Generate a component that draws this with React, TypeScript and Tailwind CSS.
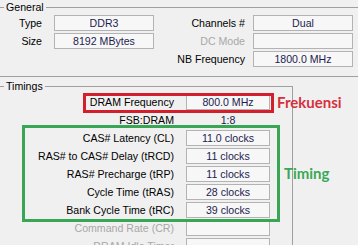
const FONT = "font-['Liberation_Sans',Arial,sans-serif]";

function Title({ text, boxed }: { text: string; boxed?: boolean }) {
  return (
    <div className="flex h-[14px]">
      <div className="w-[4px] mt-[7px] border-t border-[#a0a0a0]" />
      <span className="px-[2px] leading-[14px] text-black">{text}</span>
      <div className={`flex-1 mt-[7px] border-t border-[#a0a0a0] ${boxed ? 'border-r' : ''}`} />
    </div>
  );
}

function Box({ value, w }: { value?: string; w: string }) {
  return (
    <div className={`${w} h-[16px] border border-[#b3b3b3] bg-[#f7f7f7] text-center leading-[14px] text-[#1c1c50]`}>
      {value}
    </div>
  );
}

const general = [
  { l: 'Type', v: 'DDR3', rl: 'Channels #', rv: 'Dual' },
  { l: 'Size', v: '8192 MBytes', rl: 'DC Mode', rv: '', dim: true },
  { l: '', v: null, rl: 'NB Frequency', rv: '1800.0 MHz' },
];

const timings: { l: string; v?: string; plain?: boolean; dim?: boolean }[] = [
  { l: 'DRAM Frequency', v: '800.0 MHz' },
  { l: 'FSB:DRAM', v: '1:8', plain: true },
  { l: 'CAS# Latency (CL)', v: '11.0 clocks' },
  { l: 'RAS# to CAS# Delay (tRCD)', v: '11 clocks' },
  { l: 'RAS# Precharge (tRP)', v: '11 clocks' },
  { l: 'Cycle Time (tRAS)', v: '28 clocks' },
  { l: 'Bank Cycle Time (tRC)', v: '39 clocks' },
  { l: 'Command Rate (CR)', dim: true },
  { l: 'DRAM Idle Timer', dim: true },
];

export default function App() {
  return (
    <div className={`relative w-[358px] h-[245px] overflow-hidden bg-[#f0f0f0] text-[10.6px] ${FONT}`}>
      {/* General */}
      <Title text="General" />
      <div className="mt-[1px] flex flex-col gap-[2px]">
        {general.map((r, i) => (
          <div key={i} className="flex h-[16px] leading-[16px]">
            <span className="w-[42px] text-right text-black">{r.l}</span>
            {r.v !== null ? <div className="ml-[12px]"><Box value={r.v} w="w-[100px]" /></div> : <div className="ml-[12px] w-[100px]" />}
            <span className={`w-[91px] text-right ${r.dim ? 'text-[#a8a8a8]' : 'text-black'}`}>{r.rl}</span>
            <div className="ml-[8px]"><Box value={r.rv} w="w-[100px]" /></div>
          </div>
        ))}
      </div>
      <div className="mt-[9px] border-t border-[#a0a0a0]" />

      {/* Timings */}
      <div className="mt-[2px] w-[293px]">
        <Title text="Timings" boxed />
        <div className="pt-[1px] border-r border-[#a0a0a0] flex flex-col gap-[2px]">
          {timings.map((r, i) => (
            <div key={i} className="flex h-[16px] leading-[16px]">
              <span className={`w-[174px] text-right ${r.dim ? 'text-[#a8a8a8]' : 'text-black'}`}>{r.l}</span>
              <div className="ml-[12px]">
                {r.plain ? (
                  <div className="w-[84px] text-center text-[#1c1c50]">{r.v}</div>
                ) : (
                  <Box value={r.v} w="w-[84px]" />
                )}
              </div>
            </div>
          ))}
        </div>
      </div>

      {/* annotations */}
      <div className="absolute left-[83px] top-[93px] w-[191px] h-[20px] border-[3px] border-[#d21f2b]" />
      <span className="absolute left-[277px] top-[93px] text-[15px] leading-[19px] font-bold text-[#d6303c] font-['Lato',sans-serif]">Frekuensi</span>
      <div className="absolute left-[22px] top-[125px] w-[258px] h-[97px] border-[3px] border-[#38a655]" />
      <span className="absolute left-[284px] top-[164px] text-[15px] leading-[19px] font-bold text-[#3aa856] font-['Lato',sans-serif]">Timing</span>
    </div>
  );
}
